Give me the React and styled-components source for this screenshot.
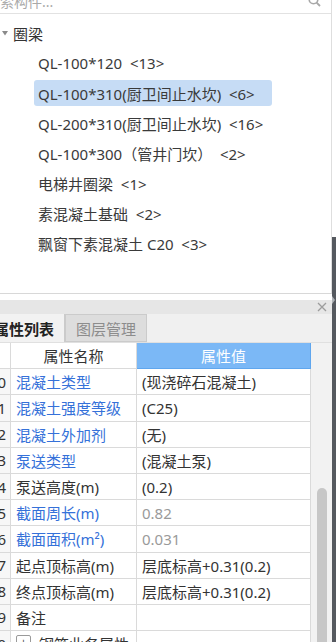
import React from "react";
import styled, { createGlobalStyle } from "styled-components";

const GlobalStyle = createGlobalStyle`
  html, body { margin: 0; padding: 0; background: #fff; overflow: hidden; }
  body { font-family: "Noto Sans", "Noto Sans CJK SC", sans-serif; }
  * { box-sizing: border-box; }
`;

const Page = styled.div`
  display: flex;
  width: 336px;
  height: 642px;
  overflow: hidden;
`;

const Main = styled.div`
  width: 332px;
  display: flex;
  flex-direction: column;
  overflow: hidden;
`;

const TreePanel = styled.div`
  height: 294px;
  flex: none;
  border-right: 1px solid #dedede;
  border-bottom: 1px solid #d8d8d8;
  background: #fff;
  overflow: hidden;
`;

const SearchBar = styled.div`
  margin-top: -12px;
  height: 26px;
  border-bottom: 1px solid #e2e2e2;
  display: flex;
  align-items: center;
  justify-content: space-between;
  padding: 0 10px 0 0;
  margin-left: -14px;
`;

const Placeholder = styled.span`
  font-size: 14px;
  color: #a9a9a9;
`;

const TreeList = styled.div`
  display: flex;
  flex-direction: column;
  gap: 4px;
  padding-top: 6px;
`;

const GroupRow = styled.div`
  height: 26px;
  display: flex;
  align-items: center;
  gap: 5px;
  padding-left: 2px;
  font-size: 15px;
  color: #333;
`;

const Item = styled.div`
  align-self: flex-start;
  margin-left: 34px;
  height: 26px;
  display: flex;
  align-items: center;
  padding: 0 17px 0 4px;
  border-radius: 3px;
  font-size: 15px;
  color: #3a3a3a;
  white-space: pre;
  background: ${(p) => (p.$selected ? "#c6dcf5" : "transparent")};
`;

const PropPanel = styled.div`
  flex: 1;
  display: flex;
  flex-direction: column;
  background: #fff;
  padding-top: 6px;
  min-height: 0;
`;

const TitleBar = styled.div`
  height: 14px;
  background: #e6e6e6;
  display: flex;
  align-items: center;
  justify-content: flex-end;
  padding-right: 5px;
`;

const Tabs = styled.div`
  height: 29px;
  display: flex;
  background: #f0f0f0;
  margin-left: -20px;
  border-bottom: 1px solid #e0e0e0;
`;

const Tab = styled.div`
  width: ${(p) => p.$w}px;
  display: flex;
  align-items: center;
  justify-content: ${(p) => (p.$active ? "flex-start" : "center")};
  padding-left: ${(p) => (p.$active ? "14px" : "0")};
  font-size: 15px;
  font-weight: ${(p) => (p.$active ? 700 : 400)};
  color: ${(p) => (p.$active ? "#222" : "#8c8c8c")};
  background: ${(p) => (p.$active ? "#f2f2f2" : "#dddddd")};
  border: ${(p) => (p.$active ? "none" : "1px solid #cbcbcb")};
  border-right: 1px solid #cbcbcb;
`;

const TableArea = styled.div`
  flex: 1;
  display: flex;
  margin-left: -20px;
  min-height: 0;
`;

const Table = styled.div`
  width: 331px;
  display: grid;
  grid-template-columns: 31px 126px 174px;
  grid-auto-rows: 26.2px;
  align-content: start;
`;

const Cell = styled.div`
  border-right: 1px solid #dadada;
  border-bottom: 1px solid #dadada;
  display: flex;
  align-items: center;
  font-size: 15px;
  white-space: nowrap;
  overflow: hidden;
  padding-left: 5px;
  color: ${(p) => p.$color || "#333"};
`;

const NumCell = styled(Cell)`
  justify-content: flex-end;
  padding: 0 4px 0 0;
  background: #f7f7f7;
  color: #333;
`;

const HeadCell = styled(Cell)`
  justify-content: center;
  padding: 0;
  background: ${(p) => (p.$blue ? "#7bb8f6" : "#fff")};
  color: ${(p) => (p.$blue ? "#fff" : "#333")};
  border-right-color: ${(p) => (p.$blue ? "#5fa6ee" : "#dadada")};
  border-bottom-color: ${(p) => (p.$blue ? "#5fa6ee" : "#dadada")};
`;

const ExpandBox = styled.span`
  width: 15px;
  height: 15px;
  border: 1px solid #9a9a9a;
  border-radius: 2px;
  margin-right: 8px;
  display: inline-flex;
  align-items: center;
  justify-content: center;
  font-size: 12px;
  color: #555;
  align-self: flex-start;
  margin-top: 4px;
`;

const ScrollTrack = styled.div`
  width: 21px;
  background: #f2f2f2;
  display: flex;
  flex-direction: column;
  align-items: center;
  padding-left: 1px;
`;

const Thumb = styled.div`
  margin-top: 145px;
  width: 10px;
  flex: 1;
  background: #c7c7c7;
  border-radius: 5px 5px 0 0;
`;

const Strip = styled.div`
  width: 4px;
  display: flex;
  flex-direction: column;
`;

const StripTop = styled.div`
  height: 237px;
  background: #fff;
`;

const StripBottom = styled.div`
  flex: 1;
  background: #55595f;
  position: relative;
`;

const Notch = styled.div`
  position: absolute;
  top: 59px;
  left: 0;
  width: 0;
  height: 0;
  border-top: 4px solid transparent;
  border-bottom: 4px solid transparent;
  border-left: 3px solid #aeb2b6;
`;

const items = [
  "QL-100*120  <13>",
  "QL-100*310(厨卫间止水坎)  <6>",
  "QL-200*310(厨卫间止水坎)  <16>",
  "QL-100*300（管井门坎）  <2>",
  "电梯井圈梁  <1>",
  "素混凝土基础  <2>",
  "飘窗下素混凝土 C20  <3>",
];

const BLUE = "#3571d9";
const rows = [
  ["10", "混凝土类型", "(现浇碎石混凝土)", BLUE, "#333"],
  ["11", "混凝土强度等级", "(C25)", BLUE, "#333"],
  ["12", "混凝土外加剂", "(无)", BLUE, "#333"],
  ["13", "泵送类型", "(混凝土泵)", BLUE, "#333"],
  ["14", "泵送高度(m)", "(0.2)", "#333", "#333"],
  ["15", "截面周长(m)", "0.82", BLUE, "#9a9a9a"],
  ["16", "截面面积(m²)", "0.031", BLUE, "#9a9a9a"],
  ["17", "起点顶标高(m)", "层底标高+0.31(0.2)", "#333", "#333"],
  ["18", "终点顶标高(m)", "层底标高+0.31(0.2)", "#333", "#333"],
  ["19", "备注", "", "#333", "#333"],
];

export default function App() {
  return (
    <>
      <GlobalStyle />
      <Page>
        <Main>
          <TreePanel>
            <SearchBar>
              <Placeholder>搜索构件...</Placeholder>
              <svg width="13" height="13" viewBox="0 0 13 13">
                <circle cx="5.5" cy="5.5" r="4.3" fill="none" stroke="#a8a8a8" strokeWidth="1.6" />
                <line x1="8.6" y1="8.6" x2="12" y2="12" stroke="#a8a8a8" strokeWidth="1.8" />
              </svg>
            </SearchBar>
            <TreeList>
              <GroupRow>
                <svg width="6" height="5" viewBox="0 0 6 5">
                  <path d="M0 0 L6 0 L3 4.5 Z" fill="#8a8a8a" />
                </svg>
                <span>圈梁</span>
              </GroupRow>
              {items.map((t, i) => (
                <Item key={i} $selected={i === 1}>
                  {t}
                </Item>
              ))}
            </TreeList>
          </TreePanel>
          <PropPanel>
            <TitleBar>
              <svg width="10" height="10" viewBox="0 0 10 10">
                <path d="M1 1 L9 9 M9 1 L1 9" stroke="#9c9c9c" strokeWidth="1.3" />
              </svg>
            </TitleBar>
            <Tabs>
              <Tab $active $w={85}>属性列表</Tab>
              <Tab $w={82}>图层管理</Tab>
            </Tabs>
            <TableArea>
              <Table>
                <HeadCell />
                <HeadCell>属性名称</HeadCell>
                <HeadCell $blue>属性值</HeadCell>
                {rows.map(([n, name, val, nc, vc]) => (
                  <React.Fragment key={n}>
                    <NumCell>{n}</NumCell>
                    <Cell $color={nc}>{name}</Cell>
                    <Cell $color={vc}>{val}</Cell>
                  </React.Fragment>
                ))}
                <NumCell>20</NumCell>
                <Cell>
                  <ExpandBox>+</ExpandBox>
                  钢筋业务属性
                </Cell>
                <Cell />
              </Table>
              <ScrollTrack>
                <Thumb />
              </ScrollTrack>
            </TableArea>
          </PropPanel>
        </Main>
        <Strip>
          <StripTop />
          <StripBottom>
            <Notch />
          </StripBottom>
        </Strip>
      </Page>
    </>
  );
}
